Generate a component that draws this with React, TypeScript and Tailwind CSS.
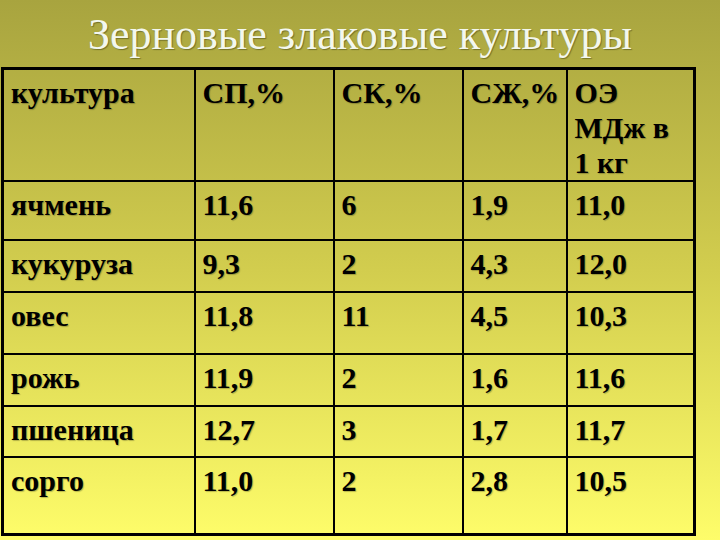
const rows = [
  { name: "ячмень", sp: "11,6", sk: "6", szh: "1,9", oe: "11,0", h: "h-[59px]" },
  { name: "кукуруза", sp: "9,3", sk: "2", szh: "4,3", oe: "12,0", h: "h-[52px]" },
  { name: "овес", sp: "11,8", sk: "11", szh: "4,5", oe: "10,3", h: "h-[62px]" },
  { name: "рожь", sp: "11,9", sk: "2", szh: "1,6", oe: "11,6", h: "h-[52px]" },
  { name: "пшеница", sp: "12,7", sk: "3", szh: "1,7", oe: "11,7", h: "h-[51px]" },
  { name: "сорго", sp: "11,0", sk: "2", szh: "2,8", oe: "10,5", h: "h-[77px]" },
];

const cell = "border-2 border-black align-top text-left pl-[7px] pt-[5px] pr-0";

const App = () => {
  return (
    <div className="w-[720px] h-[540px] overflow-hidden bg-linear-to-b from-[#a8a43f] via-[#d2cd4e] to-[#fefd6a] [font-family:'Liberation_Serif','Times_New_Roman',serif]">
      {/* Title */}
      <h1 className="h-[67px] pt-[11px] text-center text-[44px] leading-[48px] font-normal text-[#f3f7ee] [text-shadow:1px_1px_1px_rgba(70,70,20,0.55)]">
        Зерновые злаковые культуры
      </h1>

      {/* Table */}
      <table className="ml-px w-[695px] table-fixed border-collapse border-[3px] border-black text-[30px] leading-[36px] font-bold text-black [text-shadow:1px_1px_1px_rgba(0,0,0,0.25)]">
        <colgroup>
          <col className="w-[192px]" />
          <col className="w-[139px]" />
          <col className="w-[129px]" />
          <col className="w-[104px]" />
          <col className="w-[128px]" />
        </colgroup>
        <tbody>
          <tr className="h-[110px]">
            <td className={`${cell} pt-0 leading-[35px]`}>культура</td>
            <td className={`${cell} pt-0 leading-[35px]`}>СП,%</td>
            <td className={`${cell} pt-0 leading-[35px]`}>СК,%</td>
            <td className={`${cell} pt-0 pl-[5px] leading-[35px]`}>СЖ,%</td>
            <td className={`${cell} pt-0 leading-[35px]`}>
              ОЭ
              <br />
              МДж в
              <br />1 кг
            </td>
          </tr>
          {rows.map(r => (
            <tr key={r.name} className={r.h}>
              <td className={cell}>{r.name}</td>
              <td className={cell}>{r.sp}</td>
              <td className={cell}>{r.sk}</td>
              <td className={cell}>{r.szh}</td>
              <td className={cell}>{r.oe}</td>
            </tr>
          ))}
        </tbody>
      </table>
    </div>
  );
};

export default App;
